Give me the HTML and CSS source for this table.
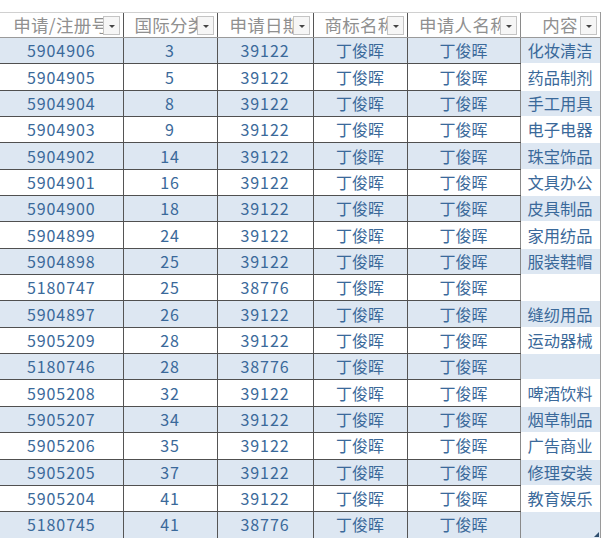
FILE: index.html
```html
<!DOCTYPE html>
<html lang="zh">
<head>
<meta charset="utf-8">
<link rel="stylesheet" href="styles.css">
</head>
<body>
<div class="sheet">
<table class="grid">
<colgroup>
<col class="c1"><col class="c2"><col class="c3"><col class="c4"><col class="c5"><col class="c6">
</colgroup>
<thead>
<tr>
<th><span class="ht">申请/注册号</span><span class="dd"></span></th>
<th><span class="ht">国际分类</span><span class="dd"></span></th>
<th><span class="ht">申请日期</span><span class="dd"></span></th>
<th><span class="ht">商标名称</span><span class="dd"></span></th>
<th><span class="ht">申请人名称</span><span class="dd"></span></th>
<th class="last"><span class="ht">内容</span><span class="dd"></span></th>
</tr>
</thead>
<tbody>
<tr class="b"><td class="n">5904906</td><td class="n">3</td><td class="n">39122</td><td>丁俊晖</td><td>丁俊晖</td><td class="last">化妆清洁</td></tr>
<tr><td class="n">5904905</td><td class="n">5</td><td class="n">39122</td><td>丁俊晖</td><td>丁俊晖</td><td class="last">药品制剂</td></tr>
<tr class="b"><td class="n">5904904</td><td class="n">8</td><td class="n">39122</td><td>丁俊晖</td><td>丁俊晖</td><td class="last">手工用具</td></tr>
<tr><td class="n">5904903</td><td class="n">9</td><td class="n">39122</td><td>丁俊晖</td><td>丁俊晖</td><td class="last">电子电器</td></tr>
<tr class="b"><td class="n">5904902</td><td class="n">14</td><td class="n">39122</td><td>丁俊晖</td><td>丁俊晖</td><td class="last">珠宝饰品</td></tr>
<tr><td class="n">5904901</td><td class="n">16</td><td class="n">39122</td><td>丁俊晖</td><td>丁俊晖</td><td class="last">文具办公</td></tr>
<tr class="b"><td class="n">5904900</td><td class="n">18</td><td class="n">39122</td><td>丁俊晖</td><td>丁俊晖</td><td class="last">皮具制品</td></tr>
<tr><td class="n">5904899</td><td class="n">24</td><td class="n">39122</td><td>丁俊晖</td><td>丁俊晖</td><td class="last">家用纺品</td></tr>
<tr class="b"><td class="n">5904898</td><td class="n">25</td><td class="n">39122</td><td>丁俊晖</td><td>丁俊晖</td><td class="last">服装鞋帽</td></tr>
<tr><td class="n">5180747</td><td class="n">25</td><td class="n">38776</td><td>丁俊晖</td><td>丁俊晖</td><td class="last"></td></tr>
<tr class="b"><td class="n">5904897</td><td class="n">26</td><td class="n">39122</td><td>丁俊晖</td><td>丁俊晖</td><td class="last">缝纫用品</td></tr>
<tr><td class="n">5905209</td><td class="n">28</td><td class="n">39122</td><td>丁俊晖</td><td>丁俊晖</td><td class="last">运动器械</td></tr>
<tr class="b"><td class="n">5180746</td><td class="n">28</td><td class="n">38776</td><td>丁俊晖</td><td>丁俊晖</td><td class="last"></td></tr>
<tr><td class="n">5905208</td><td class="n">32</td><td class="n">39122</td><td>丁俊晖</td><td>丁俊晖</td><td class="last">啤酒饮料</td></tr>
<tr class="b"><td class="n">5905207</td><td class="n">34</td><td class="n">39122</td><td>丁俊晖</td><td>丁俊晖</td><td class="last">烟草制品</td></tr>
<tr><td class="n">5905206</td><td class="n">35</td><td class="n">39122</td><td>丁俊晖</td><td>丁俊晖</td><td class="last">广告商业</td></tr>
<tr class="b"><td class="n">5905205</td><td class="n">37</td><td class="n">39122</td><td>丁俊晖</td><td>丁俊晖</td><td class="last">修理安装</td></tr>
<tr><td class="n">5905204</td><td class="n">41</td><td class="n">39122</td><td>丁俊晖</td><td>丁俊晖</td><td class="last">教育娱乐</td></tr>
<tr class="b"><td class="n">5180745</td><td class="n">41</td><td class="n">38776</td><td>丁俊晖</td><td>丁俊晖</td><td class="last"><span class="grip"></span></td></tr>
</tbody>
</table>
</div>
</body>
</html>
```
FILE: styles.css
```css
html, body {
  margin: 0;
  padding: 0;
  background: #ffffff;
}
body {
  width: 608px;
  height: 538px;
  overflow: hidden;
  font-family: "Noto Sans CJK SC", "Noto Sans", sans-serif;
}
.sheet {
  padding-top: 12px;
}
.grid {
  border-collapse: collapse;
  table-layout: fixed;
  width: 600px;
}
.c1 { width: 123px; }
.c2 { width: 94px; }
.c3 { width: 96px; }
.c4 { width: 94px; }
.c5 { width: 113px; }
.c6 { width: 80px; }

th {
  position: relative;
  height: 24px;
  padding: 0;
  font-weight: normal;
  font-size: 17.5px;
  letter-spacing: 0.3px;
  color: #909090;
  background: #ffffff;
  border-top: 1px solid #d0d0d0;
  border-bottom: 1px solid #9a9a9a;
  border-left: 1px solid #555;
  white-space: nowrap;
  overflow: hidden;
  text-align: center;
  line-height: 24px;
}
th:first-child { border-left: none; }
th.last { border-left: 1px solid #8a8a8a; border-right: 1px solid #9a9a9a; }
.ht { display: inline-block; }
.dd {
  position: absolute;
  right: 3px;
  top: 3px;
  width: 15px;
  height: 17px;
  border: 1px solid #c4c4c4;
  background: #f6f6f6;
}
.dd::after {
  content: "";
  position: absolute;
  left: 5px;
  top: 8px;
  border-left: 3px solid transparent;
  border-right: 3px solid transparent;
  border-top: 3px solid #444;
}

td {
  height: 25.35px;
  padding: 0;
  font-size: 16px;
  color: #3a699a;
  text-align: center;
  white-space: nowrap;
  border-left: 1px solid #555;
  border-bottom: 1px solid #505050;
  line-height: 25px;
}
td:first-child { border-left: none; }
td.n { letter-spacing: 0.9px; }
td.last {
  position: relative;
  font-size: 16.3px;
  border-left: 1px solid #8a8a8a;
  border-right: 1px solid #9a9a9a;
  border-bottom: 1px solid transparent;
}
tr.b td { background: #dde7f2; }
tr:last-child td { border-bottom: none; }
.grip {
  position: absolute;
  right: 1px;
  bottom: 1px;
  width: 0;
  height: 0;
  border-left: 5px solid transparent;
  border-bottom: 5px solid #2f4f6f;
}
```
